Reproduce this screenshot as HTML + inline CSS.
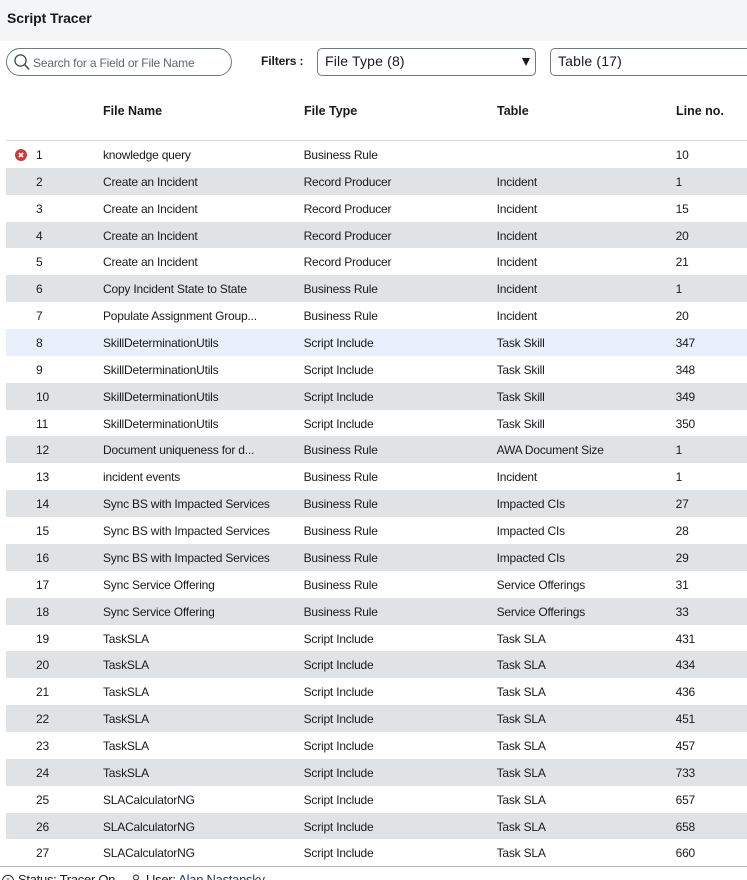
<!DOCTYPE html>
<html>
<head>
<meta charset="utf-8">
<style>
html,body{margin:0;padding:0;background:#fff;width:747px;height:880px;overflow:hidden;}
#w{position:relative;width:747px;height:880px;overflow:hidden;font-family:"Liberation Sans",Arial,sans-serif;color:#181a1f;}
.hdr{position:absolute;left:0;top:0;width:747px;height:41px;background:#f4f5f7;}
.title{position:absolute;left:7px;top:10px;font-size:14px;line-height:16px;font-weight:bold;color:#181a1f;letter-spacing:-0.08px;}
.search{position:absolute;left:6px;top:48px;width:224px;height:26px;border:1px solid #6d7a80;border-radius:14px;background:#fff;}
.search span{position:absolute;left:26px;top:7px;font-size:12px;line-height:14px;color:#5e676c;letter-spacing:-0.17px;}
.search svg{position:absolute;left:6px;top:4px;}
.flt{position:absolute;left:261px;top:54px;font-size:12px;line-height:14px;font-weight:bold;letter-spacing:-0.1px;}
.sel{position:absolute;top:48px;height:26px;border:1px solid #6d7a80;border-radius:5px;background:#fff;font-size:14px;line-height:24px;color:#181a1f;}
.sel span{position:absolute;left:7px;top:0;white-space:nowrap;letter-spacing:0.17px;}
.arrow{position:absolute;left:204px;top:9px;width:0;height:0;border-left:4.5px solid transparent;border-right:4.5px solid transparent;border-top:8px solid #181a1f;}
.th{position:absolute;top:104px;font-size:12.5px;line-height:14px;font-weight:bold;}
.hr{position:absolute;left:6px;top:140px;width:741px;height:1px;background:#d4d6d8;}
.rows{position:absolute;left:6px;top:141px;width:741px;}
.r{position:relative;height:27px;font-size:12px;letter-spacing:-0.2px;}
.r.s{height:26px;}
.r.g{background:#e0e3e6;}
.r.h{background:#e9effb;}
.r b{position:absolute;top:7px;font-weight:normal;line-height:14px;white-space:nowrap;}
.n{left:30px;}.a{left:97px;}.t{left:297.6px;}.c{left:490.6px;}.l{left:669.6px;}
.err{position:absolute;left:15px;top:149px;width:12px;height:12px;}
.foot{position:absolute;left:0;top:866px;width:747px;height:1px;background:#b0b5b8;}
.st{position:absolute;left:18px;top:872px;font-size:13px;line-height:15px;white-space:nowrap;letter-spacing:-0.28px;}
.st a{color:#1f3a6e;text-decoration:none;}
</style>
</head>
<body>
<div id="w">
<div class="hdr"></div>
<div class="title">Script Tracer</div>
<div class="search">
<svg width="18" height="18" viewBox="0 0 18 18"><circle cx="7.5" cy="7.5" r="5.6" fill="none" stroke="#3c4a52" stroke-width="1.3"/><path d="M11.6 11.6L16.2 16.4" stroke="#3c4a52" stroke-width="1.5" fill="none"/></svg>
<span>Search for a Field or File Name</span>
</div>
<div class="flt">Filters :</div>
<div class="sel" style="left:317px;width:217px;"><span>File Type (8)</span><i class="arrow"></i></div>
<div class="sel" style="left:550px;width:210px;"><span>Table (17)</span></div>
<div class="th" style="left:103px;">File Name</div>
<div class="th" style="left:304px;">File Type</div>
<div class="th" style="left:497px;">Table</div>
<div class="th" style="left:676px;">Line no.</div>
<div class="hr"></div>
<svg class="err" viewBox="0 0 12 12"><circle cx="6" cy="6" r="6" fill="#c83c3c"/><path d="M3.9 3.9L8.1 8.1M8.1 3.9L3.9 8.1" stroke="#fff" stroke-width="1.6" fill="none"/></svg>
<div class="rows">
<div class="r"><b class="n">1</b><b class="a">knowledge query</b><b class="t">Business Rule</b><b class="l">10</b></div>
<div class="r g"><b class="n">2</b><b class="a">Create an Incident</b><b class="t">Record Producer</b><b class="c">Incident</b><b class="l">1</b></div>
<div class="r"><b class="n">3</b><b class="a">Create an Incident</b><b class="t">Record Producer</b><b class="c">Incident</b><b class="l">15</b></div>
<div class="r g s"><b class="n">4</b><b class="a">Create an Incident</b><b class="t">Record Producer</b><b class="c">Incident</b><b class="l">20</b></div>
<div class="r"><b class="n">5</b><b class="a">Create an Incident</b><b class="t">Record Producer</b><b class="c">Incident</b><b class="l">21</b></div>
<div class="r g"><b class="n">6</b><b class="a">Copy Incident State to State</b><b class="t">Business Rule</b><b class="c">Incident</b><b class="l">1</b></div>
<div class="r"><b class="n">7</b><b class="a">Populate Assignment Group...</b><b class="t">Business Rule</b><b class="c">Incident</b><b class="l">20</b></div>
<div class="r h"><b class="n">8</b><b class="a">SkillDeterminationUtils</b><b class="t">Script Include</b><b class="c">Task Skill</b><b class="l">347</b></div>
<div class="r"><b class="n">9</b><b class="a">SkillDeterminationUtils</b><b class="t">Script Include</b><b class="c">Task Skill</b><b class="l">348</b></div>
<div class="r g"><b class="n">10</b><b class="a">SkillDeterminationUtils</b><b class="t">Script Include</b><b class="c">Task Skill</b><b class="l">349</b></div>
<div class="r s"><b class="n">11</b><b class="a">SkillDeterminationUtils</b><b class="t">Script Include</b><b class="c">Task Skill</b><b class="l">350</b></div>
<div class="r g"><b class="n">12</b><b class="a">Document uniqueness for d...</b><b class="t">Business Rule</b><b class="c">AWA Document Size</b><b class="l">1</b></div>
<div class="r"><b class="n">13</b><b class="a">incident events</b><b class="t">Business Rule</b><b class="c">Incident</b><b class="l">1</b></div>
<div class="r g"><b class="n">14</b><b class="a">Sync BS with Impacted Services</b><b class="t">Business Rule</b><b class="c">Impacted CIs</b><b class="l">27</b></div>
<div class="r"><b class="n">15</b><b class="a">Sync BS with Impacted Services</b><b class="t">Business Rule</b><b class="c">Impacted CIs</b><b class="l">28</b></div>
<div class="r g"><b class="n">16</b><b class="a">Sync BS with Impacted Services</b><b class="t">Business Rule</b><b class="c">Impacted CIs</b><b class="l">29</b></div>
<div class="r"><b class="n">17</b><b class="a">Sync Service Offering</b><b class="t">Business Rule</b><b class="c">Service Offerings</b><b class="l">31</b></div>
<div class="r g"><b class="n">18</b><b class="a">Sync Service Offering</b><b class="t">Business Rule</b><b class="c">Service Offerings</b><b class="l">33</b></div>
<div class="r s"><b class="n">19</b><b class="a">TaskSLA</b><b class="t">Script Include</b><b class="c">Task SLA</b><b class="l">431</b></div>
<div class="r g"><b class="n">20</b><b class="a">TaskSLA</b><b class="t">Script Include</b><b class="c">Task SLA</b><b class="l">434</b></div>
<div class="r"><b class="n">21</b><b class="a">TaskSLA</b><b class="t">Script Include</b><b class="c">Task SLA</b><b class="l">436</b></div>
<div class="r g"><b class="n">22</b><b class="a">TaskSLA</b><b class="t">Script Include</b><b class="c">Task SLA</b><b class="l">451</b></div>
<div class="r"><b class="n">23</b><b class="a">TaskSLA</b><b class="t">Script Include</b><b class="c">Task SLA</b><b class="l">457</b></div>
<div class="r g"><b class="n">24</b><b class="a">TaskSLA</b><b class="t">Script Include</b><b class="c">Task SLA</b><b class="l">733</b></div>
<div class="r"><b class="n">25</b><b class="a">SLACalculatorNG</b><b class="t">Script Include</b><b class="c">Task SLA</b><b class="l">657</b></div>
<div class="r g s"><b class="n">26</b><b class="a">SLACalculatorNG</b><b class="t">Script Include</b><b class="c">Task SLA</b><b class="l">658</b></div>
<div class="r"><b class="n">27</b><b class="a">SLACalculatorNG</b><b class="t">Script Include</b><b class="c">Task SLA</b><b class="l">660</b></div>
</div>
<div class="foot"></div>
<svg style="position:absolute;left:1px;top:874px;" width="14" height="14" viewBox="0 0 14 14"><circle cx="7" cy="7" r="5.7" fill="none" stroke="#333" stroke-width="1.1"/><path d="M7 4v3.5M4.5 7H9" stroke="#333" stroke-width="1" fill="none"/></svg>
<div class="st">Status: Tracer On</div>
<svg style="position:absolute;left:131px;top:874px;" width="10" height="10" viewBox="0 0 10 10"><circle cx="5" cy="3.4" r="2.5" fill="none" stroke="#333" stroke-width="1.1"/><path d="M1 10C1 7 9 7 9 10" stroke="#333" fill="none"/></svg>
<div class="st" style="left:146px;">User: <a>Alan Nastansky</a></div>
</div>
</body>
</html>
